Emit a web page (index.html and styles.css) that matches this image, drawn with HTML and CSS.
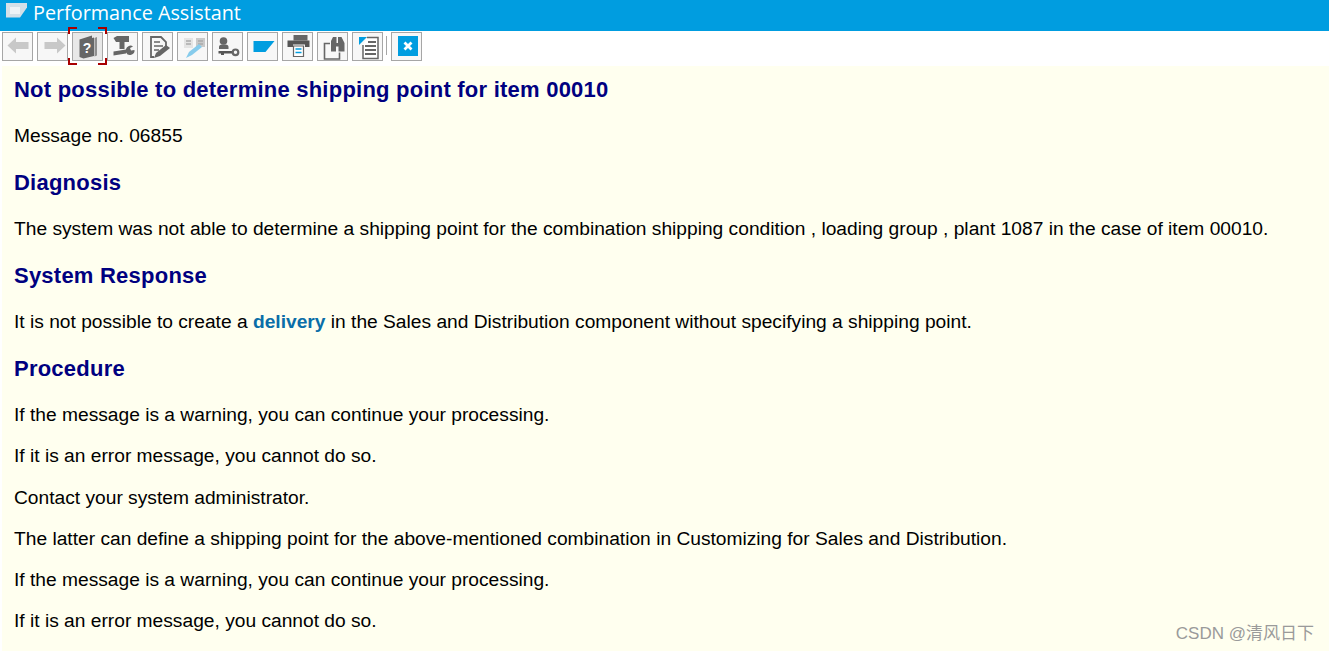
FILE: index.html
```html
<!DOCTYPE html>
<html lang="en">
<head>
    <meta charset="UTF-8">
    <title>Performance Assistant</title>
    <link rel="stylesheet" href="styles.css">
</head>
<body>
    <div class="titlebar">
        <svg class="title-icon" width="22" height="15" viewBox="0 0 22 15">
            <path d="M0 0H21V4.5L14 14.5H0Z" fill="#d3e0e8"/>
            <path d="M4 4H14V11H4Z" fill="#eef3f6"/>
        </svg>
        <span>Performance Assistant</span>
    </div>

    <div class="toolbar">
        <div class="tool"><svg viewBox="0 0 24 24"><path d="M.5 10.5L9 2.5V7H21.5V14H9V18.5Z" fill="#c8c8c8"/></svg></div>
        <div class="tool"><svg viewBox="0 0 24 24"><path d="M23.5 10.5L15 2.5V7H2.5V14H15V18.5Z" fill="#c8c8c8"/></svg></div>
        <div class="tool tool-active">
            <svg viewBox="0 0 24 24">
                <path d="M2.5 4.5L15 .5V3L17 2.5V21L6.5 23.5L2.5 22Z" fill="#666"/>
                <path d="M17.5 3L20 2V20.5L17.5 21.5Z" fill="#8f8f8f"/>
                <text x="10" y="17.5" class="help-mark">?</text>
            </svg>
            <i class="corner tl"></i><i class="corner tr"></i><i class="corner bl"></i><i class="corner br"></i>
        </div>
        <div class="tool"><svg viewBox="0 0 24 24">
            <path d="M1.5 3L5 1H17V7H12.5V14H7.5V7H4Z" fill="#666"/>
            <path d="M1.5 16.5L14 14.5V18.5L1.5 20.5Z" fill="#666"/>
            <path d="M14 17.5A4.5 4.5 0 0 0 22.5 15L19 15.5L18 13L21 11.5A4.5 4.5 0 0 0 14 14Z" fill="#666"/>
        </svg></div>
        <div class="tool"><svg viewBox="0 0 24 24">
            <path d="M7 22H4V2H14L19 7V11" fill="none" stroke="#666" stroke-width="1.8"/>
            <path d="M7 7H13M7 11H16M7 15H12" stroke="#666" stroke-width="1.6"/>
            <path d="M7 23L9 18L19 10L23 13L13 21Z" fill="#666"/>
        </svg></div>
        <div class="tool"><svg viewBox="0 0 24 24">
            <path d="M2 3H11V13H2Z" fill="#e4e4e4"/>
            <path d="M14 3H23V12H14Z" fill="#c9c9c9"/>
            <path d="M4 6H9M4 9H9M16 6H21M16 9H21" stroke="#aaa" stroke-width="1.3"/>
            <path d="M4 23L7 17L17 9L20 12L10 20Z" fill="#86cbec"/>
        </svg></div>
        <div class="tool"><svg viewBox="0 0 24 24">
            <circle cx="6.5" cy="6" r="3.8" fill="#666"/>
            <path d="M2 14V12Q2 9.5 5 9.5H8.5Q11.5 9.5 11.5 12V14Z" fill="#666"/>
            <path d="M1.5 16H15V18.5H7V20H4V18.5H1.5Z" fill="#555"/>
            <circle cx="18.5" cy="17.3" r="2.8" fill="none" stroke="#666" stroke-width="2.2"/>
        </svg></div>
        <div class="tool"><svg viewBox="0 0 24 24"><path d="M1.5 6H22.5L13.5 17H1.5Z" fill="#009de0"/></svg></div>
        <div class="tool"><svg viewBox="0 0 24 24">
            <path d="M6.5 0H20.5V5.5H6.5Z" fill="#666"/>
            <path d="M.5 5.5H22.5V12H18V9.5H6V12H.5Z" fill="#555"/>
            <path d="M6.5 11H16.5V21.5H6.5Z" fill="#fff" stroke="#666" stroke-width="1.2"/>
            <path d="M8.5 14H14.5M8.5 17.5H14.5" stroke="#009de0" stroke-width="1.4"/>
        </svg></div>
        <div class="tool"><svg viewBox="0 0 24 24">
            <path d="M8 8.5H2.5V24H17.5V17.5" fill="none" stroke="#666" stroke-width="1.6"/>
            <path d="M9 6L11 2H14.5V8H16V2H19.5L22.5 8V16.5H16.5V11.5H14V16.5H9Z" fill="#666"/>
        </svg></div>
        <div class="tool"><svg viewBox="0 0 24 24">
            <path d="M10 2.5H21V23.5H6V10" fill="#fff" stroke="#666" stroke-width="1.5"/>
            <path d="M2 2H10L2 10Z" fill="#009de0"/>
            <path d="M11 7H19M8 11H19M8 15H19M8 19H19" stroke="#666" stroke-width="1.8"/>
        </svg></div>
        <div class="sep"></div>
        <div class="tool"><svg viewBox="0 0 24 24">
            <rect x="2" y="1" width="20" height="20" fill="#009de0"/>
            <path d="M8.5 7.5L15.5 14.5M15.5 7.5L8.5 14.5" stroke="#fff" stroke-width="2.8"/>
        </svg></div>
    </div>

    <div class="content">
        <h1>Not possible to determine shipping point for item 00010</h1>
        <p class="section-end">Message no. 06855</p>

        <h2>Diagnosis</h2>
        <p class="section-end">The system was not able to determine a shipping point for the combination shipping condition , loading group , plant 1087 in the case of item 00010.</p>

        <h2>System Response</h2>
        <p class="section-end">It is not possible to create a <a href="#">delivery</a> in the Sales and Distribution component without specifying a shipping point.</p>

        <h2>Procedure</h2>
        <p>If the message is a warning, you can continue your processing.</p>
        <p>If it is an error message, you cannot do so.</p>
        <p>Contact your system administrator.</p>
        <p>The latter can define a shipping point for the above-mentioned combination in Customizing for Sales and Distribution.</p>
        <p>If the message is a warning, you can continue your processing.</p>
        <p>If it is an error message, you cannot do so.</p>

        <div class="watermark">CSDN @清风日下</div>
    </div>
</body>
</html>
```

FILE: styles.css
```css
html, body {
    height: 100%;
}
body {
    margin: 0;
    display: flex;
    flex-direction: column;
    overflow: hidden;
    font-family: "Liberation Sans", Arial, sans-serif;
    background-color: #fff;
}
.titlebar {
    height: 31px;
    flex: none;
    display: flex;
    align-items: flex-start;
    gap: 5px;
    padding-left: 6px;
    background-color: #009de0;
    color: #fff;
    font-family: "Open Sans", sans-serif;
    font-size: 19.8px;
    line-height: 25px;
}
.title-icon {
    margin-top: 3px;
}
.toolbar {
    height: 35px;
    flex: none;
    box-sizing: border-box;
    display: flex;
    align-items: flex-start;
    gap: 4px;
    padding: 1px 0 0 2px;
}
.tool {
    position: relative;
    box-sizing: border-box;
    width: 31px;
    height: 29px;
    flex: none;
    display: flex;
    align-items: flex-start;
    justify-content: center;
    padding: 2px 0 0 2px;
    background-color: #f7f7f7;
    border: 1px solid #a6a6a6;
}
.tool svg {
    height: 24px;
    width: 24px;
    overflow: visible;
}
.tool-active {
    background-color: #e8e8e8;
}
.help-mark {
    font-family: "Liberation Sans", sans-serif;
    font-weight: bold;
    font-size: 14px;
    fill: #fff;
    text-anchor: middle;
}
.corner {
    position: absolute;
    width: 7px;
    height: 5px;
    border: 0 solid #a80000;
}
.corner.tl { left: -5px; top: -6px; border-width: 2px 0 0 2px; }
.corner.tr { right: -5px; top: -6px; border-width: 2px 2px 0 0; }
.corner.bl { left: -5px; bottom: -5px; border-width: 0 0 2px 2px; }
.corner.br { right: -5px; bottom: -5px; border-width: 0 2px 2px 0; }
.sep {
    width: 1px;
    height: 19px;
    margin: 4px 0 0 -1px;
    background-color: #a6a6a6;
}
.content {
    position: relative;
    flex: 1;
    margin-left: 2px;
    padding-left: 12px;
    background-color: #ffffef;
    color: #000;
    font-size: 19.2px;
}
h1, h2 {
    margin: 0;
    color: #000080;
    font-size: 22px;
    font-weight: bold;
    line-height: 26px;
    letter-spacing: 0.23px;
}
h1 {
    padding-top: 11px;
}
p {
    margin: 0 0 19.3px;
    line-height: 22px;
}
h1 + p, h2 + p {
    margin-top: 22px;
}
.section-end {
    margin-bottom: 23px;
}
a {
    color: #0a6ea8;
    font-weight: bold;
    text-decoration: none;
}
.watermark {
    position: absolute;
    right: 15px;
    bottom: 8px;
    color: #9a9a9a;
    font-size: 17px;
    font-family: "Liberation Sans", "Noto Sans CJK SC", sans-serif;
}
```
